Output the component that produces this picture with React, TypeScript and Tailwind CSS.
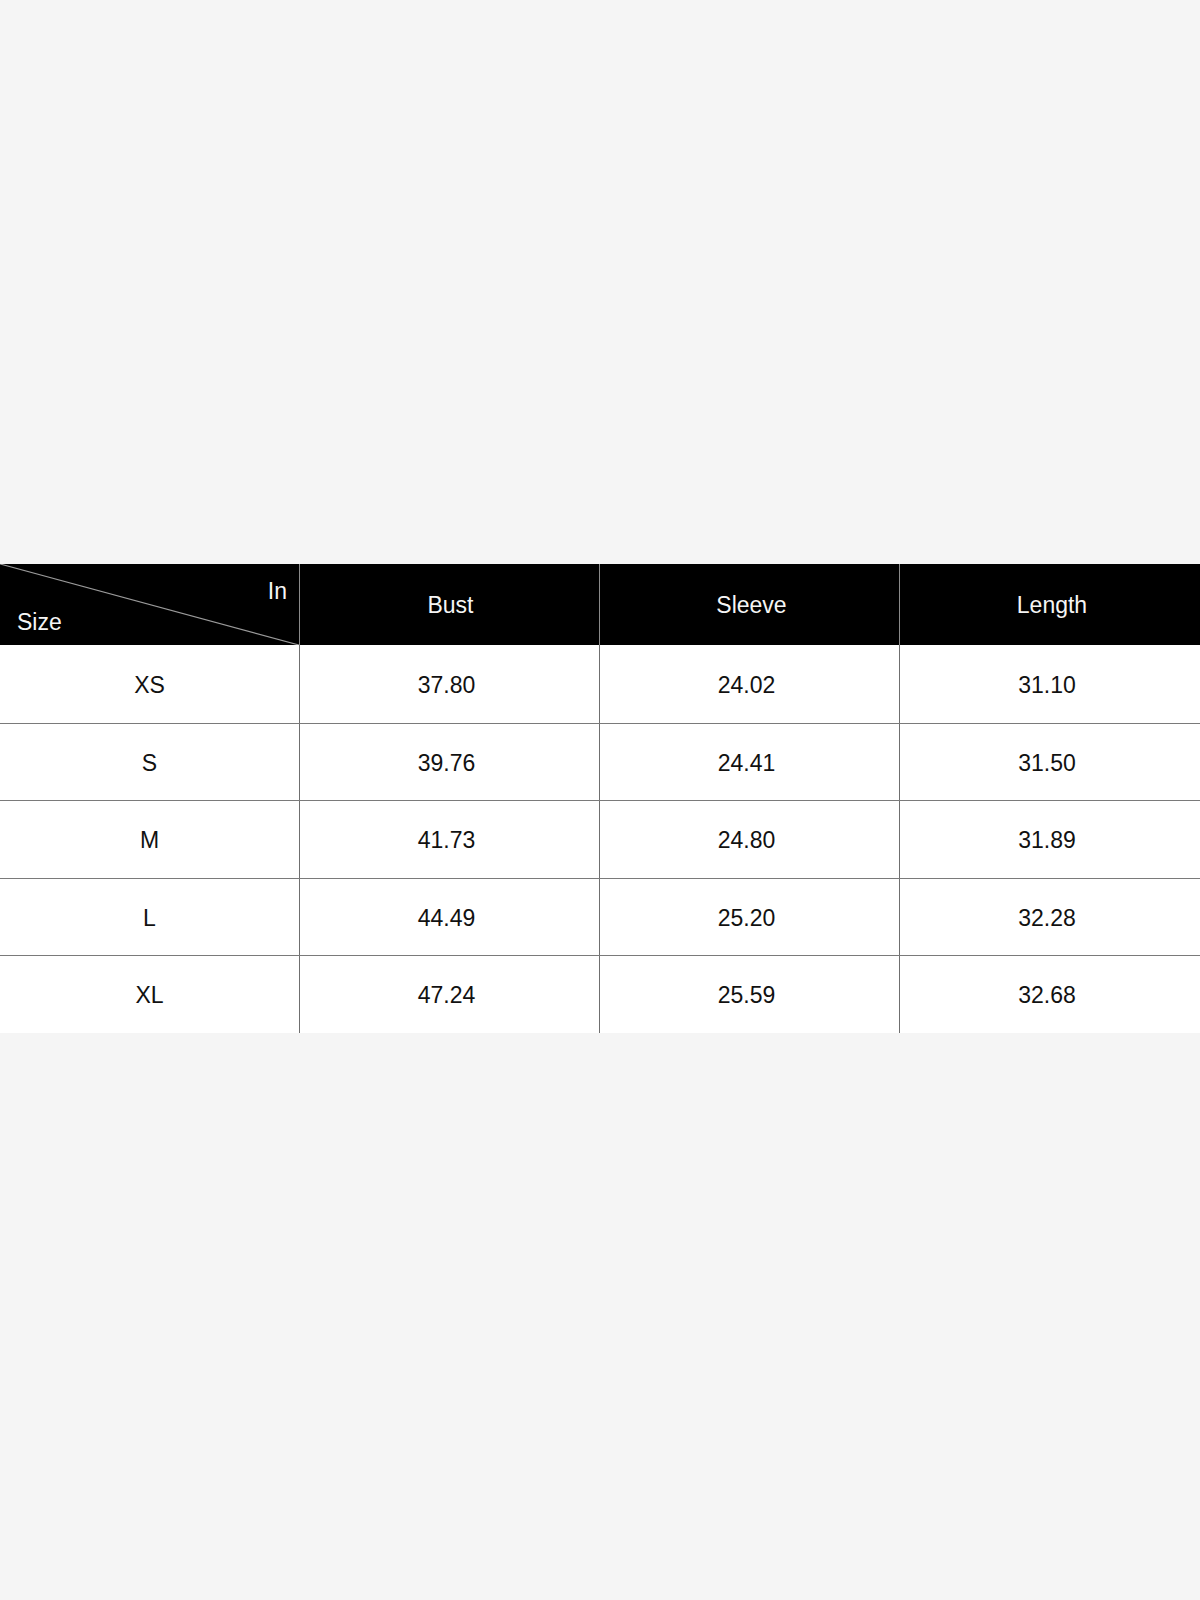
import React from "react";

const rows = [
  ["XS", "37.80", "24.02", "31.10"],
  ["S", "39.76", "24.41", "31.50"],
  ["M", "41.73", "24.80", "31.89"],
  ["L", "44.49", "25.20", "32.28"],
  ["XL", "47.24", "25.59", "32.68"],
];

export default function App() {
  return (
    <div
      className="w-[1200px] h-[1600px] bg-[#f5f5f5] pt-[564px]"
      style={{ fontFamily: '"Liberation Sans", Arial, sans-serif' }}
    >
      <div className="w-[1200px]">
        <div className="grid grid-cols-4 h-[81px] bg-black text-[#f5f5f5] text-[23px]">
          <div className="relative border-r border-[#8a8a8a]">
            <svg className="absolute inset-0" width="300" height="81" viewBox="0 0 300 81">
              <line x1="0" y1="0" x2="299" y2="81" stroke="#9a9a9a" strokeWidth="1.2" />
            </svg>
            <span className="absolute right-[12px] top-[16px] leading-none">In</span>
            <span className="absolute left-[17px] top-[47px] leading-none">Size</span>
          </div>
          <div className="flex items-center justify-center pt-[2px] pl-[2px] border-r border-[#8a8a8a]">Bust</div>
          <div className="flex items-center justify-center pt-[2px] pl-[4px] border-r border-[#8a8a8a]">Sleeve</div>
          <div className="flex items-center justify-center pt-[2px] pl-[4px]">Length</div>
        </div>
        <div className="bg-white text-[#111] text-[23px]">
          {rows.map((r, i) => (
            <div
              key={i}
              className={`grid grid-cols-4 h-[77.6px] ${i > 0 ? "border-t border-[#7a7a7a]" : ""}`}
            >
              {r.map((c, j) => (
                <div
                  key={j}
                  className={`flex items-center justify-center pt-[2px] ${j > 0 ? "pr-[6px]" : ""} ${j < 3 ? "border-r border-[#6f6f6f]" : ""}`}
                >
                  {c}
                </div>
              ))}
            </div>
          ))}
        </div>
      </div>
    </div>
  );
}
